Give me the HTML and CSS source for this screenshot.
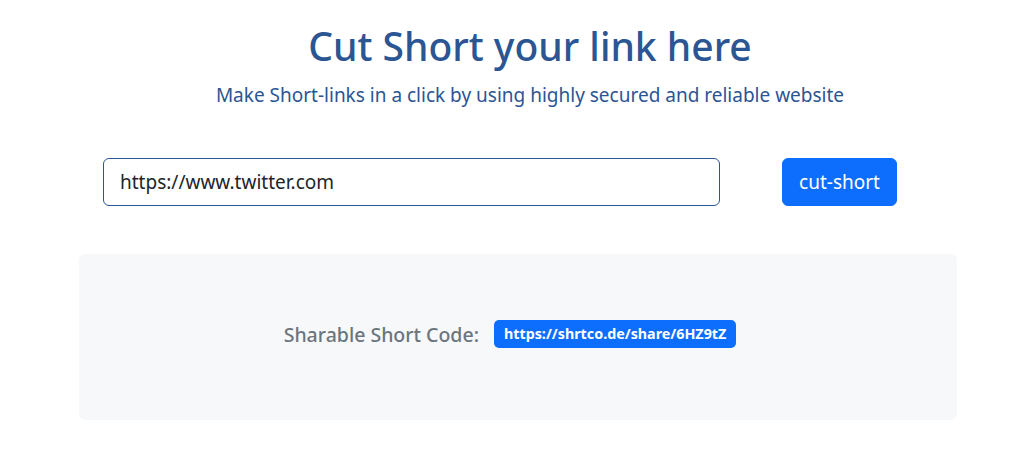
FILE: index.html
```html
<!DOCTYPE html>
<html lang="en">
<head>
<meta charset="utf-8">
<title>Cut Short</title>
<link rel="stylesheet" href="styles.css">
</head>
<body>
<header class="hero">
  <h1 class="title">Cut Short your link here</h1>
  <p class="lead">Make Short-links in a click by using highly secured and reliable website</p>
</header>
<form class="shorten-row">
  <input class="url-input" type="text" value="https://www.twitter.com">
  <button class="cut-btn" type="button">cut-short</button>
</form>
<section class="result">
  <span class="result-label">Sharable Short Code:</span>
  <span class="badge">https://shrtco.de/share/6HZ9tZ</span>
</section>
</body>
</html>
```

FILE: styles.css
```css
* { box-sizing: border-box; }
body {
  margin: 0;
  background: #fff;
  font-family: "Noto Sans", "Open Sans", sans-serif;
}
.hero {
  padding: 22px 0 0 42px;
  text-align: center;
  color: #2b5593;
}
.title {
  margin: 0;
  font-size: 39px;
  font-weight: 500;
  line-height: 48px;
}
.lead {
  margin: 11px 0 0;
  font-size: 19px;
  line-height: 28px;
}
.shorten-row {
  display: flex;
  align-items: center;
  margin: 49px 0 0 103px;
  gap: 62px;
}
.url-input {
  width: 617px;
  height: 48px;
  padding: 0 16px;
  border: 1px solid #2b5593;
  border-radius: 6px;
  font-family: inherit;
  font-size: 19px;
  color: #212529;
  outline: none;
}
.cut-btn {
  width: 115px;
  height: 48px;
  border: 1px solid #0d6efd;
  border-radius: 6px;
  background: #0d6efd;
  color: #fff;
  font-family: inherit;
  font-size: 19px;
  padding: 0;
}
.result {
  display: flex;
  align-items: center;
  justify-content: center;
  gap: 15px;
  margin: 48px 0 0 79px;
  width: 878px;
  height: 166px;
  padding: 0 16px 6px 0;
  background: #f7f8fa;
  border-radius: 6px;
}
.result-label {
  color: #6c757d;
  font-size: 19.5px;
  font-weight: 500;
}
.badge {
  display: inline-block;
  padding: 6px 10px;
  background: #0d6efd;
  color: #fff;
  font-size: 14.3px;
  font-weight: 700;
  line-height: 16px;
  border-radius: 5px;
  min-height: 28px;
}
```
